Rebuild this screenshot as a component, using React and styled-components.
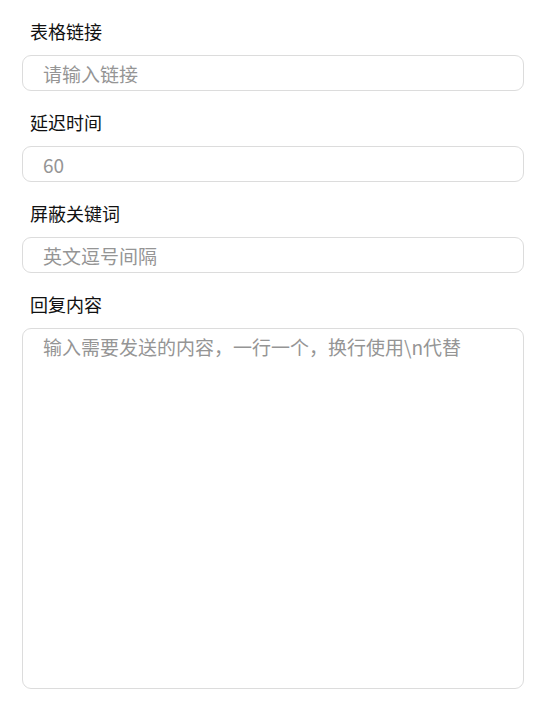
import React from "react";
import styled, { createGlobalStyle } from "styled-components";

const GlobalStyle = createGlobalStyle`
  body {
    margin: 0;
    background: #ffffff;
    font-family: "Noto Sans CJK SC", "Noto Sans", sans-serif;
  }
`;

const Page = styled.div`
  padding: 20px 36px 0 22px;
  display: flex;
  flex-direction: column;
  gap: 20px;
`;

const Field = styled.div`
  display: flex;
  flex-direction: column;
  gap: 13px;
`;

const Label = styled.label`
  padding-left: 8px;
  font-size: 18px;
  line-height: 22px;
  color: #111;
`;

const Input = styled.input`
  box-sizing: border-box;
  width: 100%;
  height: 36px;
  padding: 0 20px;
  border: 1px solid #dcdcdc;
  border-radius: 9px;
  font-family: inherit;
  font-size: 19px;
  color: #333;
  outline: none;
  &::placeholder {
    color: #959595;
  }
`;

const TextArea = styled.textarea`
  box-sizing: border-box;
  width: 100%;
  height: 361px;
  padding: 5px 20px;
  border: 1px solid #dcdcdc;
  border-radius: 9px;
  font-family: inherit;
  font-size: 19px;
  line-height: 26px;
  color: #333;
  resize: none;
  outline: none;
  &::placeholder {
    color: #959595;
  }
`;

export default function App() {
  return (
    <>
      <GlobalStyle />
      <Page>
        <Field>
          <Label>表格链接</Label>
          <Input placeholder="请输入链接" />
        </Field>
        <Field>
          <Label>延迟时间</Label>
          <Input placeholder="60" />
        </Field>
        <Field>
          <Label>屏蔽关键词</Label>
          <Input placeholder="英文逗号间隔" />
        </Field>
        <Field>
          <Label>回复内容</Label>
          <TextArea placeholder={"输入需要发送的内容，一行一个，换行使用\\n代替"} />
        </Field>
      </Page>
    </>
  );
}
